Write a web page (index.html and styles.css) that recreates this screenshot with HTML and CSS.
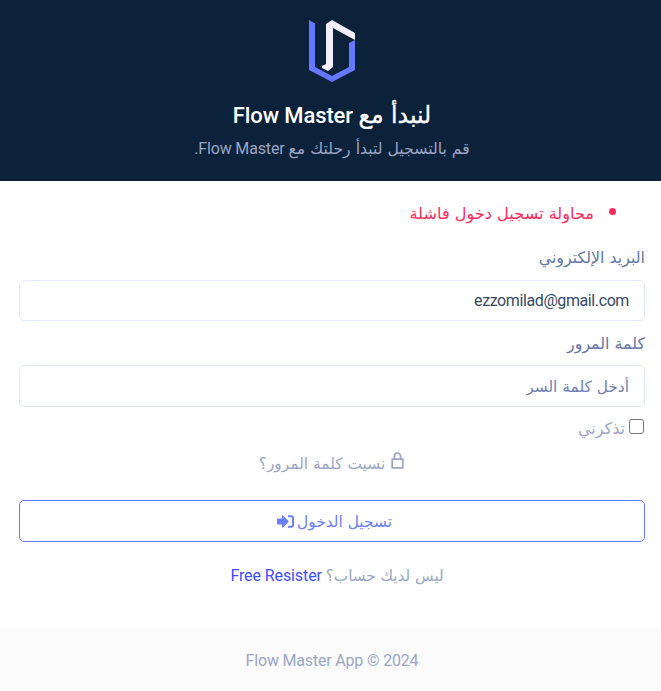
FILE: index.html
```html
<!DOCTYPE html>
<html lang="ar" dir="rtl">
<head>
<meta charset="utf-8">
<title>Flow Master</title>
<link rel="stylesheet" href="styles.css">
</head>
<body>
<header class="hero">
  <svg class="logo" width="46" height="62" viewBox="0 0 46 62">
    <path fill="#6576ff" d="M0 0L6 3.5V47L23 56L40 47V23L46 20V50L23 62L0 50Z"/>
    <path fill="#f2effa" d="M23 0L46 13V20L24 8V47L19 51L13 48V46L17 44V4Z"/>
  </svg>
  <h1 class="title"><span class="ar">لنبدأ مع</span> <span class="en" dir="ltr">Flow Master</span></h1>
  <p class="lead"><span class="ar">قم بالتسجيل لتبدأ رحلتك مع</span> <span class="en">Flow Master.</span></p>
</header>
<main class="content">
  <ul class="errors"><li><span class="ar">محاولة تسجيل دخول فاشلة</span></li></ul>
  <form class="form">
    <label class="label" for="email"><span class="ar">البريد الإلكتروني</span></label>
    <div class="field" id="email"><span class="en">ezzomilad@gmail.com</span></div>
    <label class="label" for="pass"><span class="ar">كلمة المرور</span></label>
    <div class="field placeholder" id="pass"><span class="ar">أدخل كلمة السر</span></div>
    <div class="remember"><span class="box"></span><span class="ar">تذكرني</span></div>
    <div class="forgot">
      <svg width="13" height="17" viewBox="0 0 13 17" fill="none" stroke="currentColor" stroke-width="1.7"><path d="M1.2 7.2h10.6v8.6H1.2zM3.4 7V4.2a3.1 3.1 0 0 1 6.2 0V7"/></svg>
      <span class="ar">نسيت كلمة المرور؟</span>
    </div>
    <button class="submit" type="button"><span class="ar">تسجيل الدخول</span>
      <svg width="17" height="13" viewBox="0 0 17 13"><path fill="currentColor" d="M0 4.2Q0 3.6.7 3.6H5V.9Q5.200 0 6 .5L11.300 5.800Q11.800 6.500 11.300 7.200L6 12.500Q5.200 13 5 12.100V9.400H.7Q0 9.400 0 8.800Z"/><path fill="none" stroke="currentColor" stroke-width="2" d="M11 1.200h3.200Q16 1.200 16 3v7q0 1.800-1.800 1.800H11"/></svg>
    </button>
  </form>
  <p class="register"><span class="ar">ليس لديك حساب؟</span> <a class="en">Free Resister</a></p>
</main>
<footer class="footer"><span class="en" dir="ltr">Flow Master App © 2024</span></footer>
</body>
</html>
```
FILE: styles.css
```css
* { box-sizing: border-box; }
body { margin: 0; background: #fff; color: #9ba5c5; font: 16px/24px Roboto, "DejaVu Sans", sans-serif; }
h1, p, ul { margin: 0; padding: 0; }
.ar { font-family: "DejaVu Sans", sans-serif; }
.hero { height: 181px; padding: 20px 0 0 2px; background: #0c213a; text-align: center; }
.logo { display: block; margin: 0 auto; }
.title { margin-top: 17px; padding-left: 1px; font-size: 22px; font-weight: 500; line-height: 32px; height: 32px; color: #fff; }
.title .ar { font-size: 23.5px; -webkit-text-stroke: .35px currentColor; }
.title .en { letter-spacing: -.1px; }
.lead { height: 24px; margin-top: 6px; padding-left: 1px; }
.lead .ar { font-size: 15.7px; }
.lead .en { letter-spacing: -.15px; }
.content { height: 447px; padding: 21px 16px 0 19px; }
.errors { height: 24px; padding-right: 29px; color: #ff2b5c; list-style: none; }
.errors li { display: flex; gap: 15px; }
.errors li::before { content: ""; width: 7px; height: 7px; margin-top: 6px; border-radius: 50%; background: currentColor; }
.errors .ar { font-size: 16.150px; }
.form { display: flex; flex-direction: column; }
.label { height: 24px; margin-top: 20px; color: #6576a8; }
.label .ar { font-size: 15.850px; }
.field { height: 41px; margin-top: 10px; padding: 8px 15px; border: 1px solid #e0e9f8; border-radius: 5px; color: #364a63; }
.field .en { letter-spacing: -.4px; }
.field + .label { height: 23px; margin-top: 11px; }
.field.placeholder { height: 42px; padding-top: 9px; color: #6f7fb4; }
.placeholder .ar { font-size: 15.400px; }
.remember { display: flex; gap: 4px; height: 24px; margin-top: 10px; padding-right: 1px; }
.box { width: 15px; height: 15px; margin-top: 2px; border: 1.500px solid #777; border-radius: 3px; }
.forgot { display: flex; justify-content: center; gap: 6px; height: 24px; margin-top: 11px; padding-right: 1px; }
.forgot .ar { font-size: 15.400px; }
.submit { display: flex; justify-content: center; align-items: center; gap: 3px; height: 42px; margin-top: 24px; padding: 0 0 0 5px; border: 1px solid #6576ff; border-radius: 5px; background: #fff; color: #6c80f7; font: inherit; }
.submit .ar { position: relative; top: 1px; font-size: 15.400px; }
.register { height: 24px; margin-top: 22px; padding-left: 10px; text-align: center; }
.register .ar { font-size: 15.200px; }
.register a { color: #3d4cff; letter-spacing: -.1px; }
.footer { height: 62px; padding: 21px 0 0 3px; background: #fbfbfb; text-align: center; }
.footer .en { letter-spacing: -.18px; }
```
